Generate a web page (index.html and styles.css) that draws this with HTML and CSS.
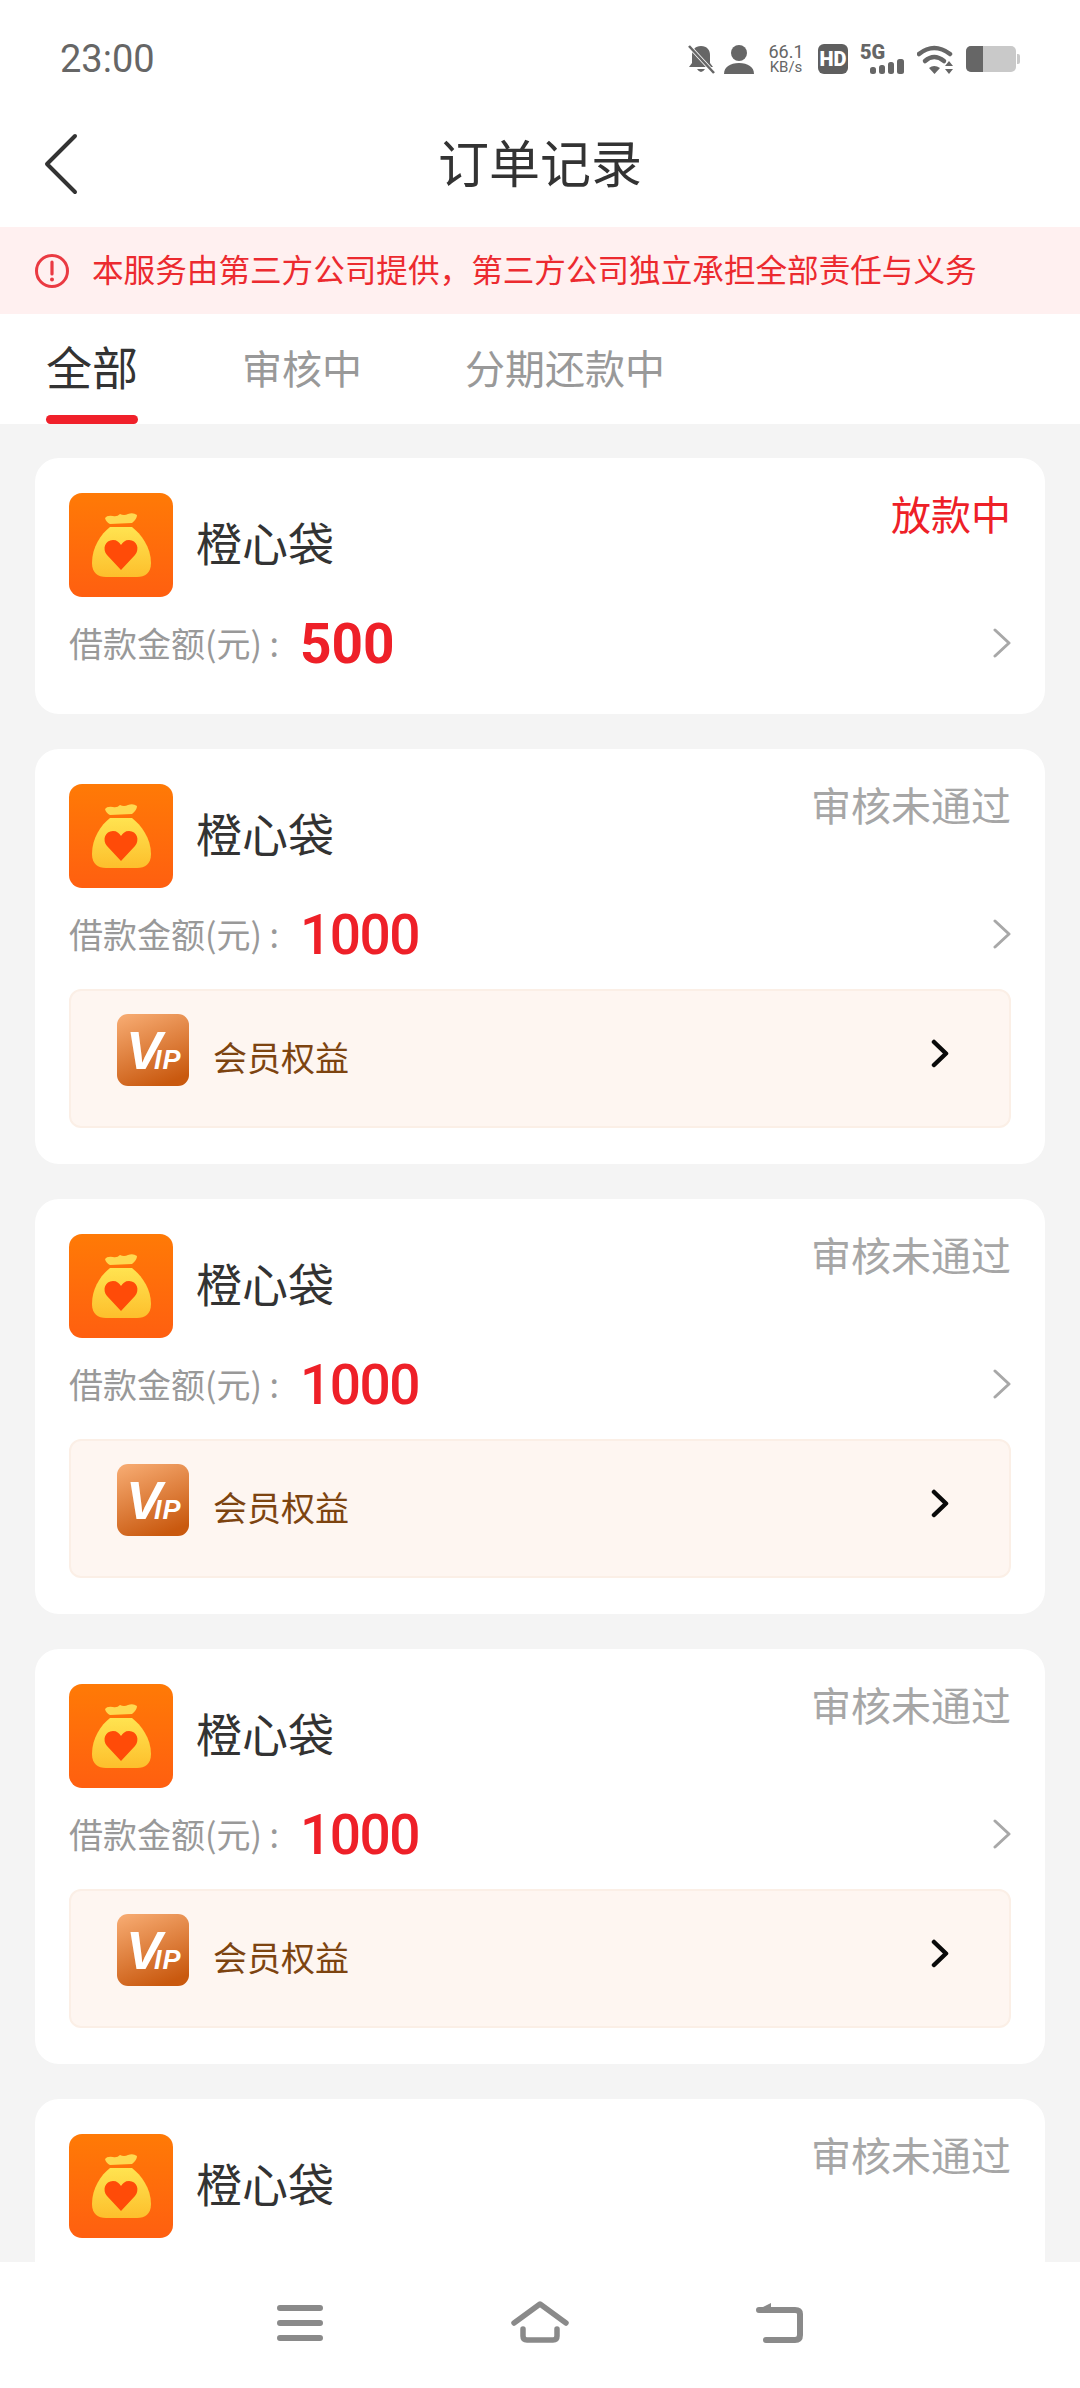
FILE: index.html
```html
<!DOCTYPE html>
<html lang="zh-CN">
<head>
    <meta charset="UTF-8">
    <meta name="viewport" content="width=device-width, initial-scale=1.0">
    <title>订单记录</title>
    <link rel="stylesheet" href="styles.css">
</head>
<body>

    <!-- shared icons -->
    <svg class="defs" width="0" height="0">
        <defs>
            <linearGradient id="bagBg" x1="0" y1="0" x2="0" y2="1">
                <stop offset="0" stop-color="#ff7a06"/>
                <stop offset="1" stop-color="#ff5f10"/>
            </linearGradient>
            <linearGradient id="bagFill" x1="0" y1="0" x2="0" y2="1">
                <stop offset="0" stop-color="#ffe350"/>
                <stop offset="1" stop-color="#fdbf2c"/>
            </linearGradient>
            <linearGradient id="vipBg" x1="0.2" y1="0" x2="0.6" y2="1">
                <stop offset="0" stop-color="#f5a86e"/>
                <stop offset="1" stop-color="#c9590f"/>
            </linearGradient>
        </defs>
        <symbol id="bag" viewBox="0 0 104 104">
            <rect width="104" height="104" rx="13" fill="url(#bagBg)"/>
            <path d="M36 25Q38 22 44 23Q48 24 51 21Q55 23 59 21Q64 19 68 22Q68 26 63 30L41 31Q37 29 36 25Z" fill="#ffd850"/>
            <path d="M41 34H63C72 41 82 54 82 70C82 80 76 84 68 84H37C29 84 23 80 23 70C23 54 32 41 41 34Z" fill="url(#bagFill)"/>
            <path d="M52 77L38 62C33 56 36 47 44 47C48 47 50 49 52 52C54 49 56 47 60 47C68 47 71 56 66 62Z" fill="#ff4b08"/>
        </symbol>
        <symbol id="arrowGrey" viewBox="0 0 18 30">
            <path d="M2 2L16 15L2 28" fill="none" stroke="#a8a8a8" stroke-width="3" stroke-linecap="round" stroke-linejoin="round"/>
        </symbol>
        <symbol id="arrowBlack" viewBox="0 0 18 30">
            <path d="M3 3L15 14.5L3 26" fill="none" stroke="#0a0a0a" stroke-width="4.5" stroke-linecap="round" stroke-linejoin="round"/>
        </symbol>
    </svg>

    <div class="status-bar">
        <span class="time">23:00</span>
        <div class="status-icons">
            <svg width="27" height="29" viewBox="0 0 27 29">
                <path d="M13 1C7 1 4 5 4 10V18L1 22H25L22 18V10C22 5 19 1 13 1ZM9 24Q13 30 17 24Z" fill="#666"/>
                <path d="M1 1L26 28" stroke="#fff" stroke-width="4"/>
                <path d="M1 1L26 28" stroke="#666" stroke-width="2.5"/>
            </svg>
            <svg class="person" width="30" height="29" viewBox="0 0 30 29">
                <circle cx="15" cy="8" r="8" fill="#666"/>
                <path d="M0 29C0 22 6 18 15 18C24 18 30 22 30 29Z" fill="#666"/>
            </svg>
            <div class="speed"><span>66.1</span><span class="speed-unit">KB/s</span></div>
            <svg class="hd" width="30" height="30" viewBox="0 0 30 30">
                <rect width="30" height="30" rx="6" fill="#5f5f5f"/>
                <text x="15" y="21.5" text-anchor="middle" class="hd-text">HD</text>
            </svg>
            <svg class="signal" width="45" height="37" viewBox="0 -8 45 37">
                <text x="0" y="14" class="net-text">5G</text>
                <rect x="10" y="22" width="6" height="7" rx="2.5" fill="#666"/>
                <rect x="19" y="20" width="6" height="9" rx="2.5" fill="#666"/>
                <rect x="28" y="17" width="6" height="12" rx="2.5" fill="#666"/>
                <rect x="37" y="14" width="7" height="15" rx="2.5" fill="#666"/>
            </svg>
            <svg class="wifi" width="37" height="29" viewBox="0 0 37 29">
                <path d="M2 9Q17 -3 33 9" fill="none" stroke="#666" stroke-width="4.5" stroke-linecap="round"/>
                <path d="M8 16Q17 8 27 16" fill="none" stroke="#666" stroke-width="4.5" stroke-linecap="round"/>
                <path d="M12 23Q17 19 23 23L17.5 29Z" fill="#666"/>
                <path d="M32 16L36 21H28ZM32 29L36 24H28Z" fill="#666"/>
            </svg>
            <svg width="54" height="26" viewBox="0 0 54 26">
                <rect width="50" height="26" rx="5" fill="#c9c9c9"/>
                <path d="M5 0H17V26H5A5 5 0 0 1 0 21V5A5 5 0 0 1 5 0Z" fill="#666"/>
                <path d="M51 8H52A2 2 0 0 1 54 10V16A2 2 0 0 1 52 18H51Z" fill="#c9c9c9"/>
            </svg>
        </div>
    </div>

    <div class="nav-bar">
        <svg class="back" width="36" height="62" viewBox="0 0 36 62">
            <path d="M32 3L4 31L32 59" fill="none" stroke="#333" stroke-width="4" stroke-linecap="round" stroke-linejoin="round"/>
        </svg>
        <h1 class="page-title">订单记录</h1>
    </div>

    <div class="notice">
        <svg width="36" height="36" viewBox="0 0 36 36">
            <circle cx="18" cy="18" r="15.5" fill="none" stroke="#ea3a42" stroke-width="3"/>
            <path d="M18 9V21" stroke="#ea3a42" stroke-width="3.2" stroke-linecap="round"/>
            <circle cx="18" cy="26.5" r="2" fill="#ea3a42"/>
        </svg>
        <span>本服务由第三方公司提供，第三方公司独立承担全部责任与义务</span>
    </div>

    <div class="tabs">
        <div class="tab active"><span>全部</span><i class="tab-line"></i></div>
        <div class="tab"><span>审核中</span></div>
        <div class="tab"><span>分期还款中</span></div>
    </div>

    <div class="order-list">

        <div class="card">
            <div class="card-top">
                <svg class="logo"><use href="#bag"/></svg>
                <span class="name">橙心袋</span>
                <span class="state lending">放款中</span>
            </div>
            <div class="amount-row">
                <span class="amount-label">借款金额(元) :</span>
                <span class="amount">500</span>
                <svg class="row-arrow"><use href="#arrowGrey"/></svg>
            </div>
        </div>

        <div class="card">
            <div class="card-top">
                <svg class="logo"><use href="#bag"/></svg>
                <span class="name">橙心袋</span>
                <span class="state">审核未通过</span>
            </div>
            <div class="amount-row">
                <span class="amount-label">借款金额(元) :</span>
                <span class="amount long">1000</span>
                <svg class="row-arrow"><use href="#arrowGrey"/></svg>
            </div>
            <div class="vip-box">
                <svg class="vip-logo" viewBox="0 0 72 72">
                    <rect width="72" height="72" rx="11" fill="url(#vipBg)"/>
                    <text x="9" y="55" class="vip-mark">V<tspan class="vip-small" dx="-8">IP</tspan></text>
                </svg>
                <span class="vip-text">会员权益</span>
                <svg class="vip-arrow"><use href="#arrowBlack"/></svg>
            </div>
        </div>

        <div class="card">
            <div class="card-top">
                <svg class="logo"><use href="#bag"/></svg>
                <span class="name">橙心袋</span>
                <span class="state">审核未通过</span>
            </div>
            <div class="amount-row">
                <span class="amount-label">借款金额(元) :</span>
                <span class="amount long">1000</span>
                <svg class="row-arrow"><use href="#arrowGrey"/></svg>
            </div>
            <div class="vip-box">
                <svg class="vip-logo" viewBox="0 0 72 72">
                    <rect width="72" height="72" rx="11" fill="url(#vipBg)"/>
                    <text x="9" y="55" class="vip-mark">V<tspan class="vip-small" dx="-8">IP</tspan></text>
                </svg>
                <span class="vip-text">会员权益</span>
                <svg class="vip-arrow"><use href="#arrowBlack"/></svg>
            </div>
        </div>

        <div class="card">
            <div class="card-top">
                <svg class="logo"><use href="#bag"/></svg>
                <span class="name">橙心袋</span>
                <span class="state">审核未通过</span>
            </div>
            <div class="amount-row">
                <span class="amount-label">借款金额(元) :</span>
                <span class="amount long">1000</span>
                <svg class="row-arrow"><use href="#arrowGrey"/></svg>
            </div>
            <div class="vip-box">
                <svg class="vip-logo" viewBox="0 0 72 72">
                    <rect width="72" height="72" rx="11" fill="url(#vipBg)"/>
                    <text x="9" y="55" class="vip-mark">V<tspan class="vip-small" dx="-8">IP</tspan></text>
                </svg>
                <span class="vip-text">会员权益</span>
                <svg class="vip-arrow"><use href="#arrowBlack"/></svg>
            </div>
        </div>

        <div class="card">
            <div class="card-top">
                <svg class="logo"><use href="#bag"/></svg>
                <span class="name">橙心袋</span>
                <span class="state">审核未通过</span>
            </div>
            <div class="amount-row">
                <span class="amount-label">借款金额(元) :</span>
                <span class="amount long">1000</span>
                <svg class="row-arrow"><use href="#arrowGrey"/></svg>
            </div>
        </div>

    </div>

    <!-- system navigation, sits over the list -->
    <div class="bottom-bar">
        <svg class="sys-icon" width="46" height="40" viewBox="0 0 46 40">
            <path d="M3 4H43M3 19H43M3 34H43" stroke="#8a8a8a" stroke-width="6" stroke-linecap="round"/>
        </svg>
        <svg class="sys-icon" width="58" height="42" viewBox="0 0 58 42">
            <path d="M3 22L29 3L55 22" fill="none" stroke="#8a8a8a" stroke-width="5.5" stroke-linecap="round" stroke-linejoin="round"/>
            <path d="M12 28V35Q12 39 16 39H42Q46 39 46 35V28" fill="none" stroke="#8a8a8a" stroke-width="5.5" stroke-linecap="round"/>
        </svg>
        <svg class="sys-icon" width="48" height="42" viewBox="0 0 48 42">
            <path d="M11 39H40Q45 39 45 34V13Q45 9 40 9H4" fill="none" stroke="#8a8a8a" stroke-width="6" stroke-linecap="round"/>
            <path d="M2 9L16 2V12Z" fill="#8a8a8a"/>
        </svg>
    </div>

</body>
</html>
```

FILE: styles.css
```css
* {
    box-sizing: border-box;
}
body {
    margin: 0;
    width: 1080px;
    height: 2388px;
    position: relative;
    overflow: hidden;
    background-color: #f4f4f4;
    font-family: "Noto Sans CJK SC", "Noto Sans", sans-serif;
}
.defs {
    position: absolute;
}
svg {
    display: block;
    flex-shrink: 0;
}

/* status bar */
.status-bar {
    height: 100px;
    padding: 18px 60px 0 60px;
    display: flex;
    justify-content: space-between;
    align-items: center;
    background: #fff;
}
.time {
    font-family: Roboto, sans-serif;
    font-size: 38px;
    color: #666;
}
.status-icons {
    display: flex;
    align-items: center;
    gap: 12px;
    color: #666;
}
.person {
    margin-left: -3px;
}
.speed {
    display: flex;
    flex-direction: column;
    align-items: center;
    width: 36px;
    font-family: Roboto, sans-serif;
    font-size: 18px;
    line-height: 16px;
    margin: 0 2px;
}
.speed-unit {
    font-size: 15px;
    line-height: 15px;
}
.hd-text {
    font-family: Roboto, sans-serif;
    font-size: 20px;
    font-weight: 900;
    fill: #fff;
}
.signal {
    margin-top: -8px;
}
.net-text {
    font-family: Roboto, sans-serif;
    font-size: 20px;
    font-weight: 900;
    fill: #666;
}

/* title bar */
.nav-bar {
    height: 127px;
    padding: 0 43px;
    display: grid;
    grid-template-columns: 1fr auto 1fr;
    align-items: center;
    background: #fff;
}
.nav-bar .page-title {
    grid-column: 2;
    margin: 0 0 6px 0;
    font-size: 51px;
    font-weight: 400;
    color: #333;
}
.back {
    grid-column: 1;
    grid-row: 1;
}

/* notice */
.notice {
    height: 87px;
    padding-left: 34px;
    display: flex;
    align-items: center;
    gap: 22px;
    background: #fff0f0;
    color: #ec2a2f;
    font-size: 31.6px;
}
.notice span {
    margin-bottom: 5px;
}

/* tabs */
.tabs {
    height: 110px;
    padding-left: 46px;
    display: flex;
    align-items: stretch;
    background: #fff;
}
.tab {
    display: flex;
    flex-direction: column;
    align-items: center;
    margin-right: 103px;
    font-size: 40px;
    color: #999;
}
.tab span {
    flex: 1;
    display: flex;
    align-items: center;
    padding-bottom: 4px;
}
.tab.active {
    width: 92px;
    margin-right: 104px;
    font-size: 46px;
    color: #333;
}
.tab.active span {
    padding-bottom: 0;
}
.tab-line {
    width: 92px;
    height: 9px;
    border-radius: 5px;
    background: #f0202a;
}

/* order cards */
.order-list {
    padding: 34px 35px 0 35px;
    display: flex;
    flex-direction: column;
    gap: 35px;
}
.card {
    padding: 35px 34px 36px 34px;
    border-radius: 24px;
    background: #fff;
}
.card-top {
    display: flex;
    align-items: center;
}
.logo {
    width: 104px;
    height: 104px;
}
.name {
    margin: 0 0 8px 23px;
    font-size: 46px;
    color: #333;
}
.state {
    margin-left: auto;
    align-self: flex-start;
    margin-top: -6px;
    font-size: 40px;
    line-height: 52px;
    color: #a6a6a6;
}
.state.lending {
    color: #ee2027;
}
.amount-row {
    height: 60px;
    margin-top: 16px;
    margin-bottom: 5px;
    display: flex;
    align-items: center;
}
.amount-label {
    width: 231px;
    padding-bottom: 2px;
    font-size: 34px;
    color: #999;
    white-space: nowrap;
}
.amount {
    padding-top: 2px;
    font-family: Roboto, "Liberation Sans", sans-serif;
    font-size: 55px;
    font-weight: 700;
    color: #ee2028;
}
.amount.long {
    font-weight: 500;
    letter-spacing: -1.5px;
}
.row-arrow {
    margin-left: auto;
    width: 18px;
    height: 30px;
}
.vip-box {
    height: 139px;
    margin-top: 25px;
    padding: 0 60px 0 46px;
    display: flex;
    align-items: center;
    border: 2px solid #fbefe6;
    border-radius: 12px;
    background: #fef6f1;
}
.vip-logo {
    width: 72px;
    height: 72px;
    margin-bottom: 17px;
}
.vip-text {
    margin: 0 0 4px 24px;
    font-size: 34px;
    color: #7d4410;
}
.vip-arrow {
    margin-left: auto;
    margin-bottom: 9px;
    width: 18px;
    height: 30px;
}
.vip-mark {
    font-family: "Liberation Sans", sans-serif;
    font-size: 54px;
    font-weight: 700;
    font-style: italic;
    fill: #fff;
}
.vip-small {
    font-size: 27px;
    letter-spacing: 1px;
}

/* system navigation */
.bottom-bar {
    position: absolute;
    left: 0;
    right: 0;
    bottom: 0;
    height: 126px;
    background: #fff;
}
.sys-icon {
    position: absolute;
    top: 39px;
}
.sys-icon:nth-child(1) {
    left: 277px;
    top: 42px;
}
.sys-icon:nth-child(2) {
    left: 511px;
}
.sys-icon:nth-child(3) {
    left: 755px;
}
```
